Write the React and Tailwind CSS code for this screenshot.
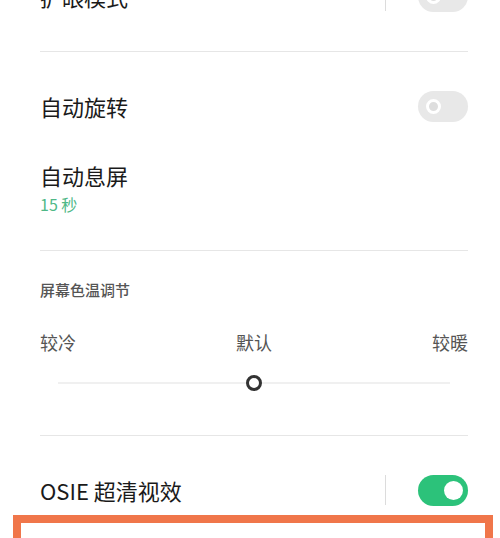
import React from "react";

const font = { fontFamily: '"Noto Sans CJK SC", "Noto Sans", sans-serif' };

function Toggle({ on }) {
  if (on) {
    return (
      <div className="w-[50px] h-[31px] rounded-full bg-[#2cc27a] flex items-center justify-end pr-[5px]">
        <div className="w-[19px] h-[19px] rounded-full bg-white" />
      </div>
    );
  }
  return (
    <div className="w-[50px] h-[31px] rounded-full bg-[#e8e8e8] flex items-center pl-[8px]">
      <div className="w-[15px] h-[15px] rounded-full border-[3px] border-white bg-[#dedede]" />
    </div>
  );
}

function Divider() {
  return <div className="h-px bg-[#e6e6e6]" />;
}

export default function App() {
  return (
    <div className="w-[500px] h-[538px] overflow-hidden bg-white" style={font}>
      <div className="pl-10 pr-8">
        {/* partly scrolled off row */}
        <div className="-mt-[34px] h-[60px] flex items-center">
          <span className="flex-1 text-[22px] text-[#1a1a1a]">扩眼模式</span>
          <div className="w-px h-[30px] bg-[#dcdcdc] mr-[32px]" />
          <Toggle />
        </div>
        <div className="mt-[25px]">
          <Divider />
        </div>

        <div className="mt-[24px] h-[60px] flex items-center">
          <span className="flex-1 text-[22px] leading-[30px] text-[#1a1a1a]">自动旋转</span>
          <Toggle />
        </div>

        <div className="mt-[24px]">
          <div className="text-[22px] leading-[30px] text-[#1a1a1a]">自动息屏</div>
          <div className="mt-[4px] text-[16px] leading-[20px] text-[#4fb887]">15 秒</div>
        </div>

        <div className="mt-[36px]">
          <Divider />
        </div>

        <div className="mt-[29px] text-[15px] leading-[20px] font-medium text-[#555]">屏幕色温调节</div>

        <div className="mt-[30px] flex justify-between text-[18px] leading-[24px] text-[#555]">
          <span>较冷</span>
          <span>默认</span>
          <span>较暖</span>
        </div>

        <div className="mt-[21px] mx-[18px] relative h-[16px] flex items-center">
          <div className="flex-1 h-[2px] bg-[#f0f0f0]" />
          <div className="absolute left-[188px] top-0 w-[16px] h-[16px] rounded-full border-[3px] border-[#333] bg-white" />
        </div>

        <div className="mt-[44px]">
          <Divider />
        </div>

        <div className="mt-[34px] h-[40px] flex items-center">
          <span className="flex-1 text-[22px] leading-[30px] text-[#1a1a1a]">OSIE 超清视效</span>
          <div className="w-px h-[30px] bg-[#dcdcdc] mr-[32px]" />
          <Toggle on />
        </div>
      </div>

      <div className="mt-[5px] ml-[13px] mr-[7px] h-[60px] border-[8px] border-[#f0764a] bg-white" />
    </div>
  );
}
